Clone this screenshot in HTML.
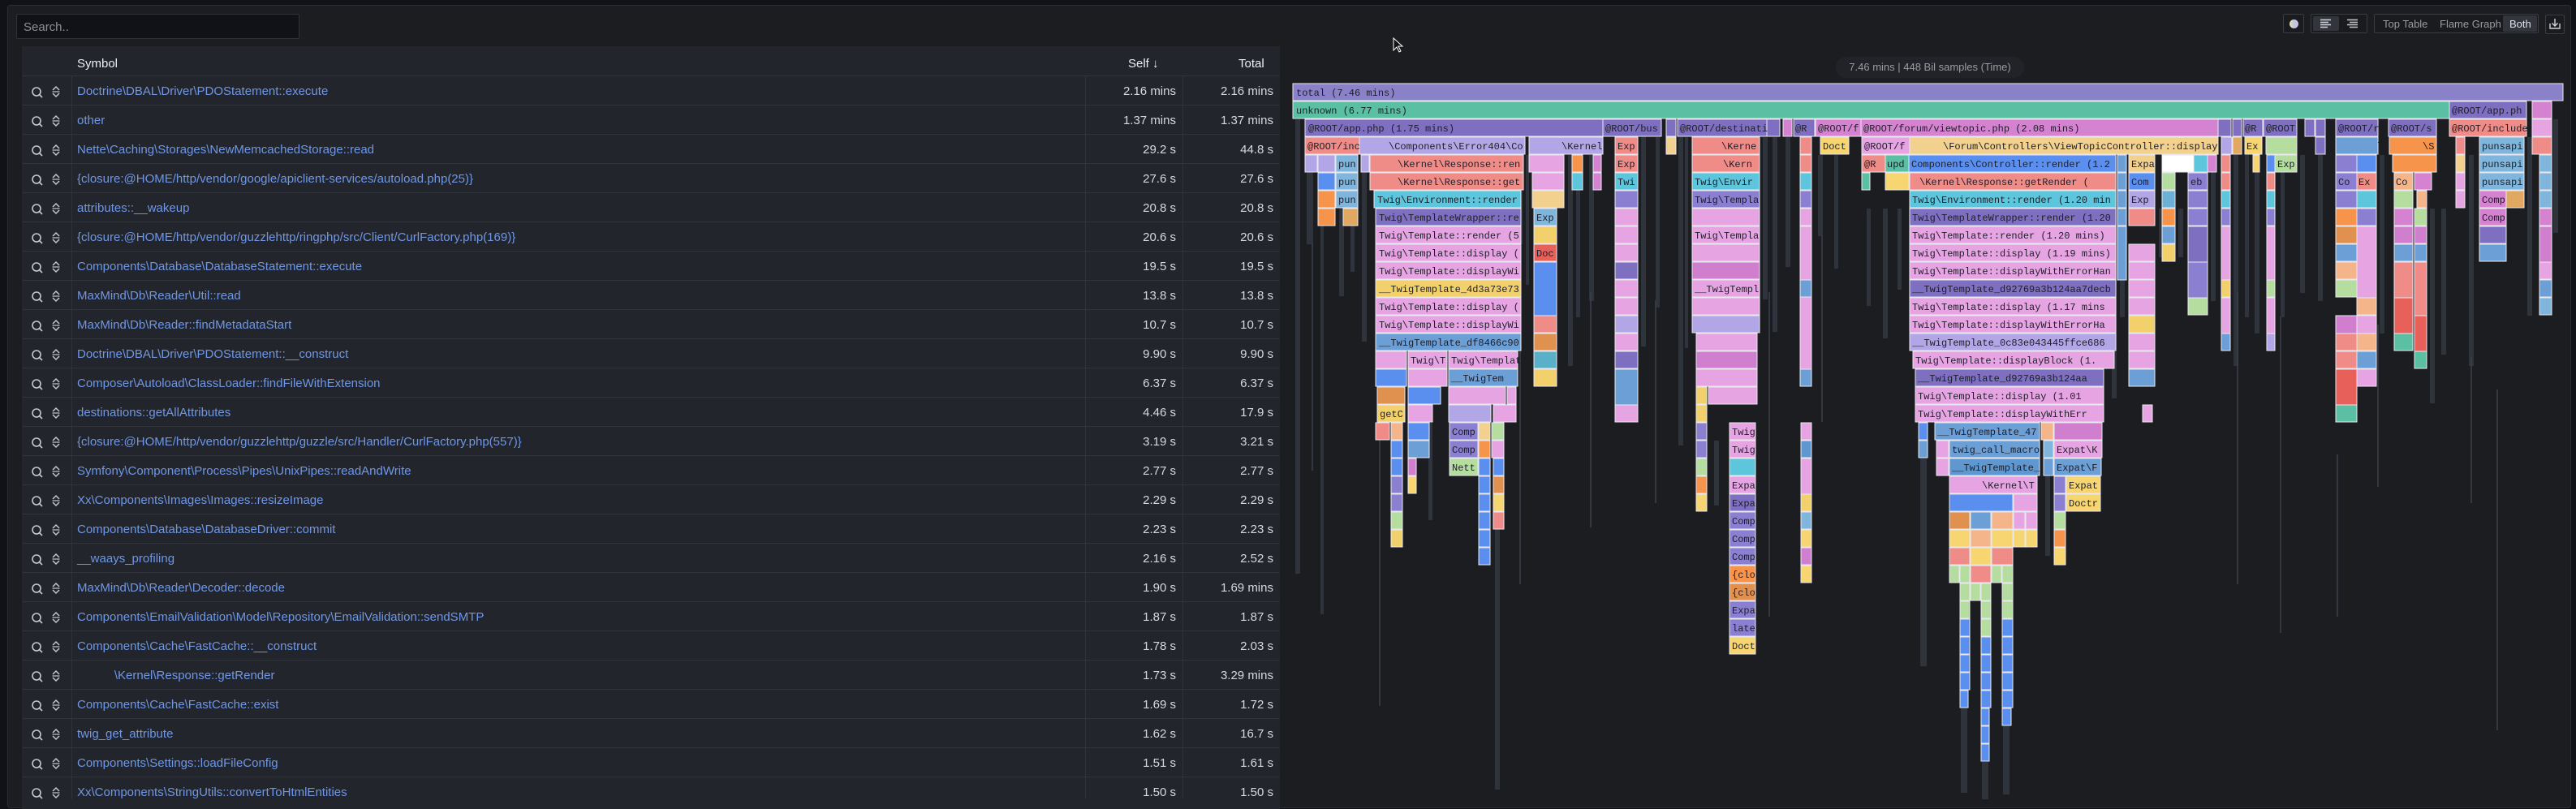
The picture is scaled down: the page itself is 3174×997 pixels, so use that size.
<!DOCTYPE html>
<html><head><meta charset="utf-8"><style>
*{margin:0;padding:0;box-sizing:border-box}
body{width:3174px;height:985px;background:#111217;overflow:hidden;position:relative;font-family:"Liberation Sans",sans-serif;color:#ccccdc}
.panel{position:absolute;left:9px;top:6px;width:3159px;height:990px;background:#1c1d21;border:1px solid #2b2d33;border-radius:4px}
.abs{position:absolute}
.search{left:20px;top:17px;width:349px;height:31px;background:#111217;border:1px solid #2f3238;border-radius:2px;font-size:15px;color:#8e8e96;padding:7px 8px}
.tbl{left:27px;top:57px;width:1550px;height:940px;background:#22252b}
.row{position:absolute;left:27px;width:1550px;height:36px;border-top:1px solid #30333a;font-size:15px}
.row .sym{position:absolute;left:68px;top:10px;color:#6f97e6;white-space:pre}
.row .s{position:absolute;right:128px;top:10px;color:#d8d8e0}
.row .t{position:absolute;right:8px;top:10px;color:#d8d8e0}
.vl{position:absolute;width:1px;background:#30333a}
.btn{position:absolute;border:1px solid #3a3c43;border-radius:2px;background:#1a1b1f}
svg text{font-family:"Liberation Mono","DejaVu Sans Mono",monospace;font-size:12px;fill:#1e1e28}
</style></head><body>
<div class="panel"></div>
<div class="abs search">Search..</div>

<!-- toolbar -->
<div class="btn" style="left:2813px;top:17px;width:26px;height:24px"><div style="position:absolute;left:7px;top:6px;width:11px;height:11px;border-radius:50%;background:linear-gradient(90deg,#f2e2a0,#b8c8e8 50%,#e0b8e0)"></div></div>
<div class="btn" style="left:2847px;top:17px;width:70px;height:24px">
 <div style="position:absolute;left:2px;top:2px;width:32px;height:18px;background:#33353c;border-radius:2px"></div>
 <svg style="position:absolute;left:10px;top:5px" width="16" height="12"><g stroke="#d0d0d8" stroke-width="1.6"><line x1="1" y1="1.5" x2="14" y2="1.5"/><line x1="1" y1="4.5" x2="11" y2="4.5"/><line x1="1" y1="7.5" x2="14" y2="7.5"/><line x1="1" y1="10.5" x2="10" y2="10.5"/></g></svg>
 <svg style="position:absolute;left:43px;top:5px" width="16" height="12"><g stroke="#c0c0c8" stroke-width="1.6"><line x1="1" y1="1.5" x2="14" y2="1.5"/><line x1="4" y1="4.5" x2="14" y2="4.5"/><line x1="1" y1="7.5" x2="14" y2="7.5"/><line x1="4" y1="10.5" x2="14" y2="10.5"/></g></svg>
</div>
<div class="btn" style="left:2925px;top:17px;width:203px;height:24px;font-size:13px;color:#9a9aa4">
 <span style="position:absolute;left:10px;top:4px">Top Table</span>
 <span style="position:absolute;left:80px;top:4px">Flame Graph</span>
 <span style="position:absolute;left:158px;top:1px;width:42px;height:20px;background:#33353c;border-radius:2px;color:#e0e0e8;padding:3px 0 0 8px">Both</span>
</div>
<div class="btn" style="left:3136px;top:18px;width:24px;height:24px"><svg width="22" height="22"><path d="M11 4v9M7.5 9.5l3.5 3.5 3.5-3.5M5 10v6h12v-6" stroke="#d0d0d8" stroke-width="1.4" fill="none"/></svg></div>

<!-- table -->
<div class="abs tbl"></div>
<div class="abs" style="left:95px;top:70px;font-size:15px;color:#f0f0f4">Symbol</div>
<div class="abs" style="left:1390px;top:70px;font-size:15px;color:#f0f0f4">Self ↓</div>
<div class="abs" style="left:1526px;top:70px;font-size:15px;color:#f0f0f4">Total</div>
<div class="vl" style="left:88px;top:93px;height:892px"></div>
<div class="vl" style="left:1337px;top:93px;height:892px"></div>
<div class="vl" style="left:1457px;top:93px;height:892px"></div>

<svg class="abs" style="left:27px;top:93px" width="61" height="900">
<defs><g id="ic"><circle cx="18" cy="0" r="5" stroke="#c8c8d0" stroke-width="1.6" fill="none"/><line x1="21.5" y1="3.5" x2="25" y2="7" stroke="#c8c8d0" stroke-width="1.6"/><path d="M38 -2l4-4 4 4M38 2l4 4 4-4" stroke="#c8c8d0" stroke-width="1.5" fill="none"/><line x1="37.5" y1="0" x2="46.5" y2="0" stroke="#c8c8d0" stroke-width="1.2"/></g></defs>
<use href="#ic" y="20"/><use href="#ic" y="56"/><use href="#ic" y="92"/><use href="#ic" y="128"/><use href="#ic" y="164"/><use href="#ic" y="200"/><use href="#ic" y="236"/><use href="#ic" y="272"/><use href="#ic" y="308"/><use href="#ic" y="344"/><use href="#ic" y="380"/><use href="#ic" y="416"/><use href="#ic" y="452"/><use href="#ic" y="488"/><use href="#ic" y="524"/><use href="#ic" y="560"/><use href="#ic" y="596"/><use href="#ic" y="632"/><use href="#ic" y="668"/><use href="#ic" y="704"/><use href="#ic" y="740"/><use href="#ic" y="776"/><use href="#ic" y="812"/><use href="#ic" y="848"/><use href="#ic" y="884"/>
</svg>

<div class="row" style="top:93px"><span class="sym">Doctrine\DBAL\Driver\PDOStatement::execute</span><span class="s">2.16 mins</span><span class="t">2.16 mins</span></div>
<div class="row" style="top:129px"><span class="sym">other</span><span class="s">1.37 mins</span><span class="t">1.37 mins</span></div>
<div class="row" style="top:165px"><span class="sym">Nette\Caching\Storages\NewMemcachedStorage::read</span><span class="s">29.2 s</span><span class="t">44.8 s</span></div>
<div class="row" style="top:201px"><span class="sym">{closure:@HOME/http/vendor/google/apiclient-services/autoload.php(25)}</span><span class="s">27.6 s</span><span class="t">27.6 s</span></div>
<div class="row" style="top:237px"><span class="sym">attributes::__wakeup</span><span class="s">20.8 s</span><span class="t">20.8 s</span></div>
<div class="row" style="top:273px"><span class="sym">{closure:@HOME/http/vendor/guzzlehttp/ringphp/src/Client/CurlFactory.php(169)}</span><span class="s">20.6 s</span><span class="t">20.6 s</span></div>
<div class="row" style="top:309px"><span class="sym">Components\Database\DatabaseStatement::execute</span><span class="s">19.5 s</span><span class="t">19.5 s</span></div>
<div class="row" style="top:345px"><span class="sym">MaxMind\Db\Reader\Util::read</span><span class="s">13.8 s</span><span class="t">13.8 s</span></div>
<div class="row" style="top:381px"><span class="sym">MaxMind\Db\Reader::findMetadataStart</span><span class="s">10.7 s</span><span class="t">10.7 s</span></div>
<div class="row" style="top:417px"><span class="sym">Doctrine\DBAL\Driver\PDOStatement::__construct</span><span class="s">9.90 s</span><span class="t">9.90 s</span></div>
<div class="row" style="top:453px"><span class="sym">Composer\Autoload\ClassLoader::findFileWithExtension</span><span class="s">6.37 s</span><span class="t">6.37 s</span></div>
<div class="row" style="top:489px"><span class="sym">destinations::getAllAttributes</span><span class="s">4.46 s</span><span class="t">17.9 s</span></div>
<div class="row" style="top:525px"><span class="sym">{closure:@HOME/http/vendor/guzzlehttp/guzzle/src/Handler/CurlFactory.php(557)}</span><span class="s">3.19 s</span><span class="t">3.21 s</span></div>
<div class="row" style="top:561px"><span class="sym">Symfony\Component\Process\Pipes\UnixPipes::readAndWrite</span><span class="s">2.77 s</span><span class="t">2.77 s</span></div>
<div class="row" style="top:597px"><span class="sym">Xx\Components\Images\Images::resizeImage</span><span class="s">2.29 s</span><span class="t">2.29 s</span></div>
<div class="row" style="top:633px"><span class="sym">Components\Database\DatabaseDriver::commit</span><span class="s">2.23 s</span><span class="t">2.23 s</span></div>
<div class="row" style="top:669px"><span class="sym">__waays_profiling</span><span class="s">2.16 s</span><span class="t">2.52 s</span></div>
<div class="row" style="top:705px"><span class="sym">MaxMind\Db\Reader\Decoder::decode</span><span class="s">1.90 s</span><span class="t">1.69 mins</span></div>
<div class="row" style="top:741px"><span class="sym">Components\EmailValidation\Model\Repository\EmailValidation::sendSMTP</span><span class="s">1.87 s</span><span class="t">1.87 s</span></div>
<div class="row" style="top:777px"><span class="sym">Components\Cache\FastCache::__construct</span><span class="s">1.78 s</span><span class="t">2.03 s</span></div>
<div class="row" style="top:813px"><span class="sym">           \Kernel\Response::getRender</span><span class="s">1.73 s</span><span class="t">3.29 mins</span></div>
<div class="row" style="top:849px"><span class="sym">Components\Cache\FastCache::exist</span><span class="s">1.69 s</span><span class="t">1.72 s</span></div>
<div class="row" style="top:885px"><span class="sym">twig_get_attribute</span><span class="s">1.62 s</span><span class="t">16.7 s</span></div>
<div class="row" style="top:921px"><span class="sym">Components\Settings::loadFileConfig</span><span class="s">1.51 s</span><span class="t">1.61 s</span></div>
<div class="row" style="top:957px"><span class="sym">Xx\Components\StringUtils::convertToHtmlEntities</span><span class="s">1.50 s</span><span class="t">1.50 s</span></div>

<!-- flame title -->
<div class="abs" style="left:2262px;top:70px;width:232px;height:26px;background:#212329;border-radius:13px;font-size:13px;color:#9a9aa4;text-align:center;padding-top:5px">7.46 mins | 448 Bil samples (Time)</div>

<!-- flame graph -->
<svg class="abs" style="left:0;top:0" width="3174" height="985">
<g fill="#2f333c">
<rect x="1596" y="147" width="6" height="560"/><rect x="1610" y="191" width="8" height="110"/><rect x="1627" y="257" width="4" height="500"/><rect x="1650" y="235" width="6" height="130"/><rect x="1664" y="235" width="5" height="100"/><rect x="1678" y="191" width="6" height="230"/><rect x="1760" y="521" width="5" height="120"/><rect x="1842" y="543" width="6" height="430"/><rect x="1870" y="191" width="6" height="110"/><rect x="1880" y="191" width="4" height="160"/><rect x="1932" y="191" width="6" height="260"/><rect x="1942" y="191" width="5" height="200"/><rect x="1958" y="191" width="6" height="180"/><rect x="2022" y="147" width="6" height="280"/><rect x="2040" y="169" width="5" height="210"/><rect x="2068" y="169" width="6" height="380"/><rect x="2076" y="169" width="4" height="260"/><rect x="2112" y="543" width="6" height="80"/><rect x="2172" y="169" width="6" height="200"/><rect x="2184" y="169" width="6" height="240"/><rect x="2200" y="169" width="6" height="160"/><rect x="2240" y="191" width="6" height="100"/><rect x="2260" y="191" width="5" height="140"/><rect x="2300" y="257" width="5" height="120"/><rect x="2320" y="257" width="6" height="160"/><rect x="2338" y="257" width="5" height="100"/><rect x="2352" y="257" width="6" height="150"/><rect x="2366" y="521" width="8" height="300"/><rect x="2520" y="565" width="6" height="120"/><rect x="2602" y="191" width="6" height="300"/><rect x="2612" y="191" width="6" height="200"/><rect x="2660" y="257" width="5" height="60"/><rect x="2684" y="257" width="6" height="60"/><rect x="2724" y="191" width="6" height="180"/><rect x="2752" y="191" width="6" height="260"/><rect x="2766" y="191" width="5" height="200"/><rect x="2778" y="191" width="6" height="220"/><rect x="2810" y="191" width="5" height="200"/><rect x="2834" y="191" width="6" height="170"/><rect x="2856" y="191" width="6" height="180"/><rect x="2932" y="191" width="6" height="220"/><rect x="2994" y="257" width="6" height="240"/><rect x="3008" y="257" width="6" height="180"/><rect x="3042" y="191" width="6" height="260"/><rect x="3114" y="169" width="6" height="220"/><rect x="3146" y="147" width="6" height="140"/>
<rect x="2416" y="807" width="8" height="170"/><rect x="2442" y="939" width="8" height="46"/><rect x="2468" y="829" width="8" height="150"/>
</g>
<g stroke="#3c404b" stroke-width="1.5"><line x1="1617" y1="300" x2="1617" y2="580"/><line x1="1700" y1="540" x2="1700" y2="870"/><line x1="1873" y1="300" x2="1873" y2="720"/><line x1="1960" y1="360" x2="1960" y2="650"/><line x1="2040" y1="370" x2="2040" y2="620"/><line x1="2180" y1="360" x2="2180" y2="760"/><line x1="2245" y1="290" x2="2245" y2="520"/><line x1="2757" y1="360" x2="2757" y2="720"/><line x1="2810" y1="390" x2="2810" y2="780"/><line x1="2880" y1="560" x2="2880" y2="760"/><line x1="2930" y1="400" x2="2930" y2="600"/><line x1="3045" y1="440" x2="3045" y2="620"/><line x1="3077" y1="480" x2="3077" y2="900"/></g>

<g stroke="#e8e8ee" stroke-width="1">
<rect x="1593" y="103" width="1565" height="21" fill="#8a82c8"/>
<rect x="1593" y="125" width="1425" height="21" fill="#5bbfa3"/><rect x="3018" y="125" width="95" height="21" fill="#7f6fc0"/><rect x="3120" y="125" width="24" height="21" fill="#d583d0"/>
<g fill="#7f6fc0"><rect x="1608" y="147" width="367" height="21"/><rect x="1975" y="147" width="72" height="21"/><rect x="2053" y="147" width="12" height="21"/><rect x="2067" y="147" width="110" height="21"/><rect x="2177" y="147" width="16" height="21"/><rect x="2210" y="147" width="26" height="21"/><rect x="2733" y="147" width="16" height="21"/><rect x="2751" y="147" width="11" height="21"/><rect x="2764" y="147" width="24" height="21"/><rect x="2789" y="147" width="41" height="21"/><rect x="2840" y="147" width="12" height="21"/><rect x="2853" y="147" width="12" height="21"/><rect x="2878" y="147" width="52" height="21"/><rect x="2943" y="147" width="59" height="21"/></g>
<g fill="#d583d0"><rect x="2197" y="147" width="11" height="21"/><rect x="2237" y="147" width="56" height="21"/><rect x="2293" y="147" width="440" height="21"/></g>
<rect x="3018" y="147" width="95" height="21" fill="#f08c87"/><rect x="3120" y="147" width="24" height="21" fill="#e6a5e2"/>
<rect x="1608" y="169" width="67" height="21" fill="#f08c87"/><rect x="1675" y="169" width="204" height="21" fill="#b3a6e6"/><rect x="1884" y="169" width="91" height="21" fill="#b3a6e6"/><rect x="1990" y="169" width="28" height="21" fill="#f08c87"/><rect x="2053" y="169" width="12" height="21" fill="#f2d08e"/><rect x="2085" y="169" width="83" height="21" fill="#f08c87"/><rect x="2218" y="169" width="14" height="21" fill="#f08c87"/><rect x="2243" y="169" width="35" height="21" fill="#f7d570"/><rect x="2294" y="169" width="59" height="21" fill="#e6a5e2"/><rect x="2353" y="169" width="380" height="21" fill="#f2d08e"/><rect x="2737" y="169" width="13" height="21" fill="#b3a6e6"/><rect x="2751" y="169" width="11" height="21" fill="#e0a860"/><rect x="2766" y="169" width="21" height="21" fill="#f7d570"/><rect x="2792" y="169" width="38" height="21" fill="#b6dda0"/><rect x="2853" y="169" width="12" height="21" fill="#7f6fc0"/><rect x="2878" y="169" width="52" height="21" fill="#6c9fd6"/><rect x="2944" y="169" width="58" height="21" fill="#f7944c"/><rect x="3026" y="169" width="11" height="21" fill="#f08c87"/><rect x="3055" y="169" width="55" height="21" fill="#80b6dc"/><rect x="3120" y="169" width="24" height="21" fill="#f08c87"/>
<rect x="1608" y="191" width="15" height="21" fill="#b3a6e6"/><rect x="1624" y="191" width="21" height="21" fill="#b3a6e6"/><rect x="1646" y="191" width="27" height="21" fill="#80b6dc"/><rect x="1677" y="191" width="10" height="21" fill="#b3a6e6"/><rect x="1688" y="191" width="189" height="21" fill="#f08c87"/><rect x="1884" y="191" width="43" height="21" fill="#e6a5e2"/><rect x="1937" y="191" width="13" height="21" fill="#f7944c"/><rect x="1963" y="191" width="10" height="21" fill="#d583d0"/><rect x="1990" y="191" width="28" height="21" fill="#f08c87"/><rect x="2085" y="191" width="83" height="21" fill="#f08c87"/><rect x="2218" y="191" width="14" height="21" fill="#f08c87"/><rect x="2294" y="191" width="29" height="21" fill="#f08c87"/><rect x="2323" y="191" width="29" height="21" fill="#5bbfa3"/><rect x="2352" y="191" width="255" height="21" fill="#5a8ff0"/><rect x="2609" y="191" width="11" height="21" fill="#6c9fd6"/><rect x="2623" y="191" width="32" height="21" fill="#f2d08e"/><rect x="2664" y="191" width="39" height="21" fill="#ffffff"/><rect x="2703" y="191" width="17" height="21" fill="#5ec6dc"/><rect x="2720" y="191" width="11" height="21" fill="#d583d0"/><rect x="2737" y="191" width="11" height="21" fill="#f08c87"/><rect x="2776" y="191" width="8" height="21" fill="#f7d570"/><rect x="2793" y="191" width="10" height="21" fill="#5a8ff0"/><rect x="2803" y="191" width="27" height="21" fill="#b6dda0"/><rect x="2878" y="191" width="26" height="21" fill="#8a7fd0"/><rect x="2904" y="191" width="24" height="21" fill="#5a8ff0"/><rect x="2948" y="191" width="54" height="21" fill="#f7944c"/><rect x="3026" y="191" width="11" height="21" fill="#f2d08e"/><rect x="3055" y="191" width="55" height="21" fill="#80b6dc"/><rect x="3129" y="191" width="15" height="21" fill="#80b6dc"/>
<rect x="1624" y="213" width="21" height="21" fill="#5a8ff0"/><rect x="1646" y="213" width="27" height="21" fill="#80b6dc"/><rect x="1688" y="213" width="189" height="21" fill="#f08c87"/><rect x="1888" y="213" width="39" height="21" fill="#e6a5e2"/><rect x="1937" y="213" width="13" height="21" fill="#5ec6dc"/><rect x="1963" y="213" width="10" height="21" fill="#d583d0"/><rect x="1990" y="213" width="28" height="21" fill="#5ec6dc"/><rect x="2085" y="213" width="83" height="21" fill="#5ec6dc"/><rect x="2218" y="213" width="14" height="21" fill="#5ec6dc"/><rect x="2294" y="213" width="10" height="21" fill="#5bbfa3"/><rect x="2323" y="213" width="29" height="21" fill="#f7d570"/><rect x="2353" y="213" width="254" height="21" fill="#f08c87"/><rect x="2609" y="213" width="11" height="21" fill="#6c9fd6"/><rect x="2623" y="213" width="32" height="21" fill="#5a8ff0"/><rect x="2664" y="213" width="16" height="21" fill="#b6dda0"/><rect x="2696" y="213" width="24" height="21" fill="#8a7fd0"/><rect x="2737" y="213" width="11" height="21" fill="#f08c87"/><rect x="2793" y="213" width="10" height="21" fill="#f08c87"/><rect x="2878" y="213" width="26" height="21" fill="#8a7fd0"/><rect x="2904" y="213" width="24" height="21" fill="#f08c87"/><rect x="2950" y="213" width="23" height="21" fill="#f5b58a"/><rect x="2975" y="213" width="21" height="21" fill="#d583d0"/><rect x="3026" y="213" width="11" height="21" fill="#e6a5e2"/><rect x="3055" y="213" width="55" height="21" fill="#80b6dc"/><rect x="3129" y="213" width="15" height="21" fill="#80b6dc"/>
<rect x="1624" y="235" width="21" height="21" fill="#f7944c"/><rect x="1646" y="235" width="27" height="21" fill="#80b6dc"/><rect x="1693" y="235" width="181" height="21" fill="#5ec6dc"/><rect x="1888" y="235" width="39" height="21" fill="#f2d08e"/><rect x="1990" y="235" width="28" height="21" fill="#8a7fd0"/><rect x="2085" y="235" width="83" height="21" fill="#8a7fd0"/><rect x="2218" y="235" width="14" height="21" fill="#8a7fd0"/><rect x="2353" y="235" width="254" height="21" fill="#5ec6dc"/><rect x="2609" y="235" width="11" height="21" fill="#6c9fd6"/><rect x="2623" y="235" width="32" height="21" fill="#b3a6e6"/><rect x="2664" y="235" width="16" height="21" fill="#6cb0d6"/><rect x="2696" y="235" width="24" height="21" fill="#8a7fd0"/><rect x="2737" y="235" width="11" height="21" fill="#5ec6dc"/><rect x="2793" y="235" width="10" height="21" fill="#5ec6dc"/><rect x="2878" y="235" width="26" height="21" fill="#8a7fd0"/><rect x="2904" y="235" width="24" height="21" fill="#5ec6dc"/><rect x="2950" y="235" width="23" height="21" fill="#b6dda0"/><rect x="2978" y="235" width="12" height="21" fill="#f5b58a"/><rect x="3026" y="235" width="11" height="21" fill="#e6a5e2"/><rect x="3055" y="235" width="33" height="21" fill="#d583d0"/><rect x="3088" y="235" width="22" height="21" fill="#e0a860"/><rect x="3129" y="235" width="15" height="21" fill="#80b6dc"/>
<rect x="1624" y="257" width="21" height="21" fill="#f7944c"/><rect x="1655" y="257" width="18" height="21" fill="#e0a860"/><rect x="1695" y="257" width="179" height="21" fill="#7f6fc0"/><rect x="1890" y="257" width="28" height="21" fill="#80b6dc"/><rect x="1990" y="257" width="28" height="21" fill="#e6a5e2"/><rect x="2085" y="257" width="83" height="21" fill="#e6a5e2"/><rect x="2218" y="257" width="14" height="21" fill="#e6a5e2"/><rect x="2353" y="257" width="254" height="21" fill="#7f6fc0"/><rect x="2609" y="257" width="11" height="21" fill="#6c9fd6"/><rect x="2623" y="257" width="32" height="21" fill="#f08c87"/><rect x="2664" y="257" width="16" height="21" fill="#f7944c"/><rect x="2696" y="257" width="24" height="21" fill="#8a7fd0"/><rect x="2737" y="257" width="11" height="21" fill="#8a7fd0"/><rect x="2793" y="257" width="10" height="21" fill="#8a7fd0"/><rect x="2878" y="257" width="26" height="21" fill="#f7944c"/><rect x="2904" y="257" width="24" height="21" fill="#8a7fd0"/><rect x="2950" y="257" width="23" height="21" fill="#d583d0"/><rect x="2975" y="257" width="15" height="21" fill="#b6dda0"/><rect x="3055" y="257" width="33" height="21" fill="#d583d0"/><rect x="3129" y="257" width="15" height="21" fill="#d583d0"/>
<g fill="#e6a5e2"><rect x="1695" y="279" width="179" height="21"/><rect x="1695" y="301" width="179" height="21"/><rect x="1695" y="323" width="179" height="21"/><rect x="1695" y="367" width="179" height="21"/><rect x="1695" y="389" width="179" height="21"/><rect x="1990" y="279" width="28" height="21"/><rect x="1990" y="301" width="28" height="21"/><rect x="1990" y="345" width="28" height="21"/><rect x="1990" y="367" width="28" height="21"/><rect x="1990" y="411" width="28" height="21"/><rect x="1990" y="499" width="28" height="21"/><rect x="2085" y="279" width="83" height="21"/><rect x="2085" y="301" width="83" height="21"/><rect x="2085" y="345" width="83" height="21"/><rect x="2085" y="367" width="83" height="21"/><rect x="2090" y="411" width="75" height="21"/><rect x="2090" y="455" width="75" height="21"/><rect x="2105" y="477" width="60" height="21"/><rect x="2218" y="279" width="14" height="190"/><rect x="2353" y="279" width="254" height="21"/><rect x="2353" y="301" width="254" height="21"/><rect x="2353" y="323" width="254" height="21"/><rect x="2353" y="367" width="254" height="21"/><rect x="2353" y="389" width="254" height="21"/><rect x="2357" y="433" width="248" height="21"/><rect x="2360" y="477" width="232" height="21"/><rect x="2360" y="499" width="232" height="21"/><rect x="2623" y="301" width="32" height="21"/><rect x="2623" y="323" width="32" height="21"/><rect x="2623" y="345" width="32" height="21"/><rect x="2623" y="367" width="32" height="21"/><rect x="2623" y="411" width="32" height="21"/><rect x="2623" y="433" width="32" height="21"/><rect x="2640" y="499" width="12" height="21"/><rect x="2737" y="279" width="11" height="66"/><rect x="2737" y="367" width="11" height="44"/><rect x="2793" y="279" width="10" height="66"/><rect x="2793" y="367" width="10" height="44"/><rect x="2904" y="279" width="24" height="88"/><rect x="2904" y="389" width="24" height="44"/><rect x="2904" y="455" width="24" height="21"/><rect x="1695" y="433" width="38" height="21"/><rect x="1735" y="433" width="48" height="21"/><rect x="1785" y="433" width="85" height="21"/><rect x="1735" y="455" width="48" height="21"/><rect x="1785" y="477" width="70" height="21"/><rect x="1857" y="477" width="11" height="21"/><rect x="1735" y="499" width="30" height="21"/><rect x="1840" y="499" width="28" height="21"/><rect x="3129" y="323" width="15" height="21"/></g>
<g fill="#f2d06b"><rect x="1695" y="345" width="179" height="21"/><rect x="1890" y="279" width="28" height="21"/><rect x="1890" y="455" width="28" height="21"/><rect x="2623" y="389" width="32" height="21"/><rect x="2664" y="301" width="16" height="21"/><rect x="2737" y="345" width="11" height="21"/><rect x="2090" y="477" width="13" height="21"/><rect x="2090" y="499" width="13" height="21"/><rect x="1697" y="499" width="34" height="21"/></g>
<g fill="#6c9fd6"><rect x="1695" y="411" width="179" height="21"/><rect x="1785" y="455" width="85" height="21"/><rect x="1990" y="455" width="28" height="44"/><rect x="2218" y="345" width="14" height="21"/><rect x="2218" y="455" width="14" height="21"/><rect x="2623" y="455" width="32" height="21"/><rect x="2664" y="279" width="16" height="21"/><rect x="2878" y="301" width="26" height="21"/><rect x="2904" y="433" width="24" height="21"/><rect x="2950" y="301" width="23" height="21"/><rect x="2975" y="301" width="15" height="21"/><rect x="3055" y="301" width="33" height="21"/><rect x="3129" y="345" width="15" height="21"/><rect x="2737" y="411" width="11" height="21"/><rect x="2609" y="279" width="11" height="66"/></g>
<g fill="#7f6fc0"><rect x="1990" y="323" width="28" height="21"/><rect x="1990" y="433" width="28" height="21"/><rect x="2353" y="345" width="254" height="21"/><rect x="2360" y="455" width="232" height="21"/><rect x="2696" y="279" width="24" height="44"/><rect x="3055" y="279" width="33" height="21"/></g>
<g fill="#d07fcf"><rect x="2085" y="323" width="83" height="21"/><rect x="2090" y="433" width="75" height="21"/><rect x="2878" y="389" width="26" height="44"/><rect x="2950" y="279" width="23" height="21"/><rect x="2975" y="279" width="15" height="21"/><rect x="3129" y="279" width="15" height="44"/></g>
<g fill="#b3a6e6"><rect x="2085" y="389" width="83" height="21"/><rect x="1990" y="389" width="28" height="21"/><rect x="2353" y="411" width="254" height="21"/><rect x="2793" y="411" width="10" height="21"/><rect x="1785" y="499" width="52" height="21"/></g>
<g fill="#5a8ff0"><rect x="1890" y="323" width="28" height="66"/><rect x="1695" y="455" width="38" height="21"/><rect x="1735" y="477" width="40" height="21"/></g>
<g fill="#f08c87"><rect x="1890" y="389" width="28" height="21"/><rect x="2878" y="411" width="26" height="21"/><rect x="2950" y="323" width="23" height="44"/><rect x="2975" y="323" width="15" height="66"/><rect x="2878" y="433" width="26" height="21"/></g>
<g fill="#e8605a"><rect x="1890" y="301" width="28" height="21"/><rect x="2950" y="367" width="23" height="44"/><rect x="2975" y="389" width="15" height="44"/><rect x="2878" y="455" width="26" height="44"/></g>
<g fill="#e0904f"><rect x="1890" y="411" width="28" height="21"/><rect x="1697" y="477" width="34" height="21"/><rect x="2878" y="279" width="26" height="21"/></g>
<g fill="#5ab0c8"><rect x="1890" y="433" width="28" height="21"/></g>
<g fill="#f5b58a"><rect x="2878" y="323" width="26" height="21"/><rect x="2904" y="367" width="24" height="21"/><rect x="2904" y="411" width="24" height="21"/></g>
<g fill="#b6dda0"><rect x="2878" y="345" width="26" height="21"/><rect x="2793" y="345" width="10" height="21"/><rect x="2696" y="367" width="24" height="21"/></g>
<g fill="#5bbfa3"><rect x="2950" y="411" width="23" height="21"/><rect x="2975" y="433" width="15" height="21"/><rect x="2878" y="499" width="26" height="21"/></g>
<rect x="2696" y="323" width="24" height="44" fill="#8a7fd0"/>
<rect x="3129" y="367" width="15" height="21" fill="#80b6dc"/>
<rect x="2364" y="521" width="11" height="21" fill="#5a8ff0"/><rect x="2384" y="521" width="129" height="21" fill="#6c9fd6"/><rect x="2515" y="521" width="15" height="21" fill="#f5b58a"/><rect x="2531" y="521" width="59" height="21" fill="#d07fcf"/>
<rect x="2364" y="543" width="11" height="21" fill="#6c9fd6"/><rect x="2386" y="543" width="15" height="21" fill="#e6a5e2"/><rect x="2402" y="543" width="111" height="21" fill="#6c9fd6"/><rect x="2518" y="543" width="12" height="21" fill="#80b6dc"/><rect x="2531" y="543" width="59" height="21" fill="#e6a5e2"/>
<rect x="2386" y="565" width="15" height="21" fill="#e6a5e2"/><rect x="2402" y="565" width="111" height="21" fill="#5f98d0"/><rect x="2518" y="565" width="12" height="21" fill="#6c9fd6"/><rect x="2531" y="565" width="58" height="21" fill="#6c9fd6"/>
<rect x="2402" y="587" width="108" height="21" fill="#e6a5e2"/><rect x="2531" y="587" width="14" height="21" fill="#8a7fd0"/><rect x="2546" y="587" width="42" height="21" fill="#f7d570"/>
<rect x="2402" y="609" width="78" height="21" fill="#5a8ff0"/><rect x="2481" y="609" width="29" height="21" fill="#e6a5e2"/><rect x="2531" y="609" width="14" height="21" fill="#8a7fd0"/><rect x="2546" y="609" width="42" height="21" fill="#f7d570"/>
<rect x="2402" y="631" width="25" height="21" fill="#e0904f"/><rect x="2428" y="631" width="25" height="21" fill="#6c9fd6"/><rect x="2454" y="631" width="26" height="21" fill="#f5b58a"/><rect x="2481" y="631" width="14" height="21" fill="#e6a5e2"/><rect x="2496" y="631" width="14" height="21" fill="#e6a5e2"/><rect x="2531" y="631" width="14" height="21" fill="#b6dda0"/>
<rect x="2402" y="653" width="25" height="21" fill="#f7d570"/><rect x="2428" y="653" width="25" height="21" fill="#f5b58a"/><rect x="2454" y="653" width="26" height="21" fill="#f7d570"/><rect x="2481" y="653" width="14" height="21" fill="#f7d570"/><rect x="2496" y="653" width="14" height="21" fill="#f7d570"/><rect x="2531" y="653" width="14" height="21" fill="#f7944c"/>
<rect x="2402" y="675" width="25" height="21" fill="#f08c87"/><rect x="2428" y="675" width="25" height="21" fill="#f7d570"/><rect x="2454" y="675" width="26" height="21" fill="#f08c87"/><rect x="2531" y="675" width="14" height="21" fill="#f7d570"/>
<g fill="#b6dda0"><rect x="2402" y="697" width="12" height="21"/><rect x="2415" y="697" width="12" height="21"/><rect x="2454" y="697" width="12" height="21"/><rect x="2467" y="697" width="13" height="21"/><rect x="2415" y="719" width="12" height="21"/><rect x="2428" y="719" width="12" height="21"/><rect x="2441" y="719" width="12" height="21"/><rect x="2467" y="719" width="13" height="21"/><rect x="2415" y="741" width="12" height="21"/><rect x="2441" y="741" width="12" height="21"/><rect x="2467" y="741" width="13" height="21"/><rect x="2441" y="763" width="12" height="21"/></g>
<rect x="2428" y="697" width="25" height="21" fill="#f08c87"/>
<g fill="#5a8ff0"><rect x="2415" y="763" width="12" height="21"/><rect x="2467" y="763" width="13" height="21"/><rect x="2415" y="785" width="12" height="21"/><rect x="2441" y="785" width="12" height="21"/><rect x="2467" y="785" width="13" height="21"/><rect x="2415" y="807" width="12" height="21"/><rect x="2441" y="807" width="12" height="21"/><rect x="2467" y="807" width="13" height="21"/><rect x="2415" y="829" width="12" height="21"/><rect x="2441" y="829" width="12" height="21"/><rect x="2467" y="829" width="13" height="21"/><rect x="2415" y="851" width="10" height="21"/><rect x="2441" y="851" width="12" height="21"/><rect x="2467" y="851" width="13" height="21"/><rect x="2441" y="873" width="10" height="21"/><rect x="2467" y="873" width="11" height="21"/><rect x="2441" y="895" width="10" height="21"/><rect x="2441" y="917" width="10" height="21"/></g>
<rect x="1695" y="521" width="17" height="21" fill="#f08c87"/><rect x="1714" y="521" width="14" height="21" fill="#f5b58a"/><rect x="1735" y="521" width="26" height="21" fill="#5a8ff0"/><rect x="1786" y="521" width="35" height="21" fill="#8a7fd0"/><rect x="1822" y="521" width="14" height="21" fill="#f2d08e"/><rect x="1838" y="521" width="15" height="21" fill="#b6dda0"/>
<rect x="1714" y="543" width="14" height="21" fill="#5a8ff0"/><rect x="1735" y="543" width="26" height="21" fill="#6c9fd6"/><rect x="1786" y="543" width="35" height="21" fill="#8a7fd0"/><rect x="1822" y="543" width="14" height="21" fill="#f7944c"/><rect x="1838" y="543" width="15" height="21" fill="#e6a5e2"/>
<rect x="1714" y="565" width="14" height="21" fill="#5a8ff0"/><rect x="1735" y="565" width="10" height="21" fill="#d07fcf"/><rect x="1786" y="565" width="35" height="21" fill="#b6dda0"/><rect x="1822" y="565" width="14" height="21" fill="#5a8ff0"/><rect x="1840" y="565" width="13" height="21" fill="#5a8ff0"/>
<rect x="1714" y="587" width="14" height="21" fill="#8a7fd0"/><rect x="1735" y="587" width="10" height="21" fill="#f7d570"/><rect x="1822" y="587" width="14" height="21" fill="#5a8ff0"/><rect x="1840" y="587" width="13" height="21" fill="#e0904f"/>
<rect x="1714" y="609" width="14" height="21" fill="#8a7fd0"/><rect x="1822" y="609" width="14" height="21" fill="#5a8ff0"/><rect x="1840" y="609" width="13" height="21" fill="#f7d570"/>
<rect x="1714" y="631" width="14" height="21" fill="#b6dda0"/><rect x="1822" y="631" width="14" height="21" fill="#5a8ff0"/><rect x="1840" y="631" width="13" height="21" fill="#f08c87"/>
<rect x="1714" y="653" width="14" height="21" fill="#f2d06b"/><rect x="1822" y="653" width="14" height="21" fill="#5a8ff0"/><rect x="1822" y="675" width="14" height="21" fill="#5a8ff0"/>
<rect x="2090" y="521" width="13" height="21" fill="#8a7fd0"/><rect x="2090" y="543" width="13" height="21" fill="#8a7fd0"/><rect x="2090" y="565" width="13" height="21" fill="#b6dda0"/><rect x="2090" y="587" width="13" height="21" fill="#f7944c"/><rect x="2090" y="609" width="13" height="21" fill="#f7d570"/>
<rect x="2131" y="521" width="32" height="21" fill="#e6a5e2"/><rect x="2131" y="543" width="32" height="21" fill="#e6a5e2"/><rect x="2131" y="565" width="32" height="21" fill="#5ec6dc"/><rect x="2131" y="587" width="32" height="21" fill="#e6a5e2"/><rect x="2131" y="609" width="32" height="21" fill="#7f6fc0"/><rect x="2131" y="631" width="32" height="21" fill="#8a7fd0"/><rect x="2131" y="653" width="32" height="21" fill="#8a7fd0"/><rect x="2131" y="675" width="32" height="21" fill="#8a7fd0"/><rect x="2131" y="697" width="32" height="21" fill="#f7944c"/><rect x="2131" y="719" width="32" height="21" fill="#e0904f"/><rect x="2131" y="741" width="32" height="21" fill="#8a7fd0"/><rect x="2131" y="763" width="32" height="21" fill="#8a7fd0"/><rect x="2131" y="785" width="32" height="21" fill="#f7d570"/>
<rect x="2219" y="521" width="13" height="21" fill="#e6a5e2"/><rect x="2219" y="543" width="13" height="21" fill="#5f98d0"/><rect x="2219" y="565" width="13" height="44" fill="#e6a5e2"/><rect x="2219" y="609" width="13" height="21" fill="#f2d06b"/><rect x="2219" y="631" width="13" height="21" fill="#80b6dc"/><rect x="2219" y="653" width="13" height="21" fill="#f7d570"/><rect x="2219" y="675" width="13" height="21" fill="#d07fcf"/><rect x="2219" y="697" width="13" height="21" fill="#f7d570"/>
</g>

<text x="1597" y="118">total (7.46 mins)</text>
<text x="1597" y="140">unknown (6.77 mins)</text>
<text x="1612" y="162">@ROOT/app.php (1.75 mins)</text>
<text x="1978" y="162">@ROOT/bus</text>
<text x="2070" y="162">@ROOT/destinati</text>
<text x="2212" y="162">@R</text>
<text x="2240" y="162">@ROOT/f</text>
<text x="2296" y="162">@ROOT/forum/viewtopic.php (2.08 mins)</text>
<text x="2766" y="162">@R</text>
<text x="2792" y="162">@ROOT</text>
<text x="2881" y="162">@ROOT/r</text>
<text x="2946" y="162">@ROOT/s</text>
<text x="3021" y="140">@ROOT/app.ph</text>
<text x="3021" y="162">@ROOT/include</text>
<text x="1611" y="184">@ROOT/inc</text>
<text x="1711" y="184">\Components\Error404\Co</text>
<text x="1924" y="184">\Kernel</text>
<text x="1993" y="184">Exp</text>
<text x="2121" y="184">\Kerne</text>
<text x="2246" y="184">Doct</text>
<text x="2297" y="184">@ROOT/f</text>
<text x="2394" y="184">\Forum\Controllers\ViewTopicController::display</text>
<text x="2768" y="184">Ex</text>
<text x="2929" y="184">\N</text>
<text x="2985" y="184">\S</text>
<text x="3058" y="184">punsapi</text>
<text x="1649" y="206">pun</text>
<text x="1722" y="206">\Kernel\Response::ren</text>
<text x="1993" y="206">Exp</text>
<text x="2123" y="206">\Kern</text>
<text x="2297" y="206">@R</text>
<text x="2325" y="206">upd</text>
<text x="2355" y="206">Components\Controller::render (1.2</text>
<text x="2626" y="206">Expa</text>
<text x="2806" y="206">Exp</text>
<text x="3058" y="206">punsapi</text>
<text x="1649" y="228">pun</text>
<text x="1722" y="228">\Kernel\Response::get</text>
<text x="1993" y="228">Twi</text>
<text x="2088" y="228">Twig\Envir</text>
<text x="2365" y="228">\Kernel\Response::getRender (</text>
<text x="2626" y="228">Com</text>
<text x="2699" y="228">eb</text>
<text x="2881" y="228">Co</text>
<text x="2906" y="228">Ex</text>
<text x="2952" y="228">Co</text>
<text x="3058" y="228">punsapi</text>
<text x="1649" y="250">pun</text>
<text x="1697" y="250">Twig\Environment::render</text>
<text x="2088" y="250">Twig\Templa</text>
<text x="2356" y="250">Twig\Environment::render (1.20 min</text>
<text x="2626" y="250">Exp</text>
<text x="3058" y="250">Comp</text>
<text x="1699" y="272">Twig\TemplateWrapper::re</text>
<text x="1893" y="272">Exp</text>
<text x="2356" y="272">Twig\TemplateWrapper::render (1.20</text>
<text x="3058" y="272">Comp</text>
<text x="1699" y="294">Twig\Template::render (5</text>
<text x="2088" y="294">Twig\Templa</text>
<text x="2356" y="294">Twig\Template::render (1.20 mins)</text>
<text x="1699" y="316">Twig\Template::display (</text>
<text x="1893" y="316">Doc</text>
<text x="2356" y="316">Twig\Template::display (1.19 mins)</text>
<text x="1699" y="338">Twig\Template::displayWi</text>
<text x="2356" y="338">Twig\Template::displayWithErrorHan</text>
<text x="1699" y="360">__TwigTemplate_4d3a73e73</text>
<text x="2088" y="360">__TwigTempl</text>
<text x="2356" y="360">__TwigTemplate_d92769a3b124aa7decb</text>
<text x="1699" y="382">Twig\Template::display (</text>
<text x="2356" y="382">Twig\Template::display (1.17 mins</text>
<text x="1699" y="404">Twig\Template::displayWi</text>
<text x="2356" y="404">Twig\Template::displayWithErrorHa</text>
<text x="1699" y="426">__TwigTemplate_df8466c90</text>
<text x="2356" y="426">__TwigTemplate_0c83e043445ffce686</text>
<text x="1738" y="448">Twig\T</text>
<text x="1788" y="448">Twig\Templat</text>
<text x="2360" y="448">Twig\Template::displayBlock (1.</text>
<text x="1788" y="470">__TwigTem</text>
<text x="2363" y="470">__TwigTemplate_d92769a3b124aa</text>
<text x="2363" y="492">Twig\Template::display (1.01</text>
<text x="1700" y="514">getC</text>
<text x="2363" y="514">Twig\Template::displayWithErr</text>
<text x="2387" y="536">__TwigTemplate_47</text>
<text x="2405" y="558">twig_call_macro</text>
<text x="2534" y="558">Expat\K</text>
<text x="2405" y="580">__TwigTemplate_</text>
<text x="2534" y="580">Expat\F</text>
<text x="2442" y="602">\Kernel\T</text>
<text x="2549" y="602">Expat</text>
<text x="2549" y="624">Doctr</text>
<text x="1789" y="536">Comp</text>
<text x="1789" y="558">Comp</text>
<text x="1789" y="580">Nett</text>
<text x="2134" y="536">Twig</text>
<text x="2134" y="558">Twig</text>
<text x="2134" y="602">Expa</text>
<text x="2134" y="624">Expa</text>
<text x="2134" y="646">Comp</text>
<text x="2134" y="668">Comp</text>
<text x="2134" y="690">Comp</text>
<text x="2134" y="712">{clo</text>
<text x="2134" y="734">{clo</text>
<text x="2134" y="756">Expa</text>
<text x="2134" y="778">late</text>
<text x="2134" y="800">Doct</text>
</svg>

<svg class="abs" style="left:1716px;top:46px" width="14" height="20"><path d="M1 1v15l4-4 3 6 2-1-3-6h5z" fill="#111" stroke="#fff" stroke-width="1"/></svg>
</body></html>
